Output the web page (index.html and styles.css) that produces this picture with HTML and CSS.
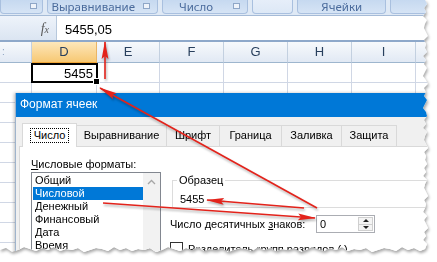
FILE: index.html
```html
<!DOCTYPE html>
<html lang="ru">

<head>
    <meta charset="UTF-8">
    <meta name="viewport" content="width=device-width, initial-scale=1.0">
    <title>Формат ячеек</title>
    <link rel="stylesheet" href="styles.css">
</head>

<body>
    <div class="shot">
        <div class="paper">
            <div class="ribbon">
                <div class="grp w1"><span class="launch"></span></div>
                <div class="grp w2 has-l">Выравнивание<span class="launch"></span></div>
                <div class="grp w3 has-l">Число<span class="launch"></span></div>
                <div class="grp w4 blank"></div>
                <div class="grp w5">Ячейки</div>
                <div class="grp w6"></div>
            </div>

            <div class="fbar">
                <div class="fx"><i>f<small>x</small></i></div>
                <div class="finput">5455,05</div>
            </div>

            <div class="grid">
                <div class="hd"><span class="dots">:</span></div>
                <div class="hd on">D</div>
                <div class="hd">E</div>
                <div class="hd">F</div>
                <div class="hd">G</div>
                <div class="hd">H</div>
                <div class="hd">I</div>
                <div class="hd"></div>

                <div class="cell"></div>
                <div class="cell active">5455</div>
                <div class="cell"></div>
                <div class="cell"></div>
                <div class="cell"></div>
                <div class="cell"></div>
                <div class="cell"></div>
                <div class="cell"></div>

                <div class="rest"></div>
            </div>

            <!-- dialog window over the sheet -->
            <div class="dialog">
                <div class="dtitle">Формат ячеек</div>
                <div class="dbody">
                    <div class="tabs">
                        <div class="tab on t1"><span class="focus">Число</span></div>
                        <div class="tab t2">Выравнивание</div>
                        <div class="tab t3">Шрифт</div>
                        <div class="tab t4">Граница</div>
                        <div class="tab t5">Заливка</div>
                        <div class="tab t6">Защита</div>
                    </div>
                    <div class="panel">
                        <div class="leftcol">
                            <div class="lbl"><u>Ч</u>исловые форматы:</div>
                            <div class="list">
                                <ul class="items">
                                    <li>Общий</li>
                                    <li class="sel">Числовой</li>
                                    <li>Денежный</li>
                                    <li>Финансовый</li>
                                    <li>Дата</li>
                                    <li>Время</li>
                                </ul>
                                <div class="vscroll">
                                    <svg width="9" height="6" viewBox="0 0 9 6"><path d="M1 5 L4.5 1.5 L8 5" fill="none" stroke="#a6a6a6" stroke-width="1.3"/></svg>
                                </div>
                            </div>
                        </div>
                        <div class="rightcol">
                            <fieldset class="sample">
                                <legend>Образец</legend>
                                <div class="sval">5455</div>
                            </fieldset>
                            <div class="decrow">
                                <span class="declbl">Число десятичных <u>з</u>наков:</span>
                                <div class="spin">
                                    <span class="spinval">0</span>
                                    <div class="spinbtns">
                                        <span class="up"></span>
                                        <span class="down"></span>
                                    </div>
                                </div>
                            </div>
                            <div class="chkrow"><span class="chk"></span>Разделитель групп разрядов ( )</div>
                        </div>
                    </div>
                </div>
            </div>

            <!-- red pointer arrows drawn on top -->
            <svg class="arrows" width="430" height="254" viewBox="0 0 430 254">
                <defs>
                    <marker id="head" markerWidth="18" markerHeight="8" refX="17" refY="4" orient="auto" markerUnits="userSpaceOnUse">
                        <path d="M0 0.6 L18 4 L0 7.4 L3 4 Z" fill="#e3231b"/>
                    </marker>
                </defs>
                <g stroke="#e3231b" stroke-width="1.6" fill="none" marker-end="url(#head)">
                    <line x1="105" y1="79" x2="105" y2="42"/>
                    <line x1="317" y1="208" x2="100" y2="88"/>
                    <line x1="304" y1="208" x2="207" y2="200"/>
                    <line x1="103" y1="203" x2="315" y2="218"/>
                </g>
            </svg>
        </div>
    </div>
</body>

</html>
```

FILE: styles.css
```css
* {
    box-sizing: border-box;
}

body {
    margin: 0;
    background: #fff;
    font-family: "Liberation Sans", Arial, sans-serif;
    color: #000;
}

.shot {
    width: 437px;
    height: 262px;
    filter: drop-shadow(1px 2px 1.5px rgba(0, 0, 0, 0.35));
}

.paper {
    position: relative;
    width: 430px;
    height: 254px;
    overflow: hidden;
    background: #fff;
    clip-path: polygon(0 0, 425px 0, 427px 4px, 424px 8px, 426px 12px, 423px 16px, 427px 20px, 425px 24px, 424px 28px, 426px 32px, 428px 36px, 424px 40px, 426px 44px, 425px 48px, 427px 52px, 423px 56px, 426px 60px, 424px 64px, 427px 68px, 425px 72px, 423px 76px, 426px 80px, 428px 84px, 424px 88px, 426px 92px, 424px 96px, 427px 100px, 425px 104px, 423px 108px, 426px 112px, 427px 116px, 424px 120px, 426px 124px, 423px 128px, 427px 132px, 425px 136px, 424px 140px, 426px 144px, 428px 148px, 424px 152px, 426px 156px, 425px 160px, 427px 164px, 424px 168px, 426px 172px, 423px 176px, 427px 180px, 425px 184px, 424px 188px, 426px 192px, 428px 196px, 424px 200px, 426px 204px, 425px 208px, 423px 212px, 427px 216px, 424px 220px, 426px 224px, 428px 228px, 424px 232px, 426px 236px, 423px 240px, 427px 244px, 425px 249px, 420px 251px, 414px 248px, 408px 250px, 402px 247px, 396px 251px, 390px 249px, 384px 248px, 378px 250px, 372px 252px, 366px 248px, 360px 250px, 354px 249px, 348px 251px, 342px 247px, 336px 250px, 330px 248px, 324px 251px, 318px 249px, 312px 247px, 306px 250px, 300px 252px, 294px 248px, 288px 250px, 282px 249px, 276px 251px, 270px 248px, 264px 250px, 258px 247px, 252px 251px, 246px 249px, 240px 248px, 234px 250px, 228px 252px, 222px 248px, 216px 250px, 210px 249px, 204px 251px, 198px 247px, 192px 250px, 186px 248px, 180px 251px, 174px 249px, 168px 247px, 162px 250px, 156px 252px, 150px 248px, 144px 250px, 138px 249px, 132px 251px, 126px 248px, 120px 250px, 114px 247px, 108px 251px, 102px 249px, 96px 248px, 90px 250px, 84px 252px, 78px 248px, 72px 250px, 66px 249px, 60px 251px, 54px 247px, 48px 250px, 42px 248px, 36px 251px, 30px 249px, 24px 247px, 18px 250px, 12px 252px, 6px 248px, 0 250px);
}

/* ribbon group captions */
.ribbon {
    display: flex;
    gap: 4px;
    height: 16px;
    background: #dfe9f5;
    border-bottom: 1px solid #a5bbd7;
}

.grp {
    position: relative;
    height: 14px;
    border: 1px solid #a9c0df;
    border-top: 0;
    border-radius: 0 0 4px 4px;
    background: linear-gradient(#c6d9f0, #d6e4f5);
    color: #4a6b9c;
    font-family: "Noto Sans", sans-serif;
    font-size: 11.5px;
    line-height: 13px;
    text-align: center;
    white-space: nowrap;
}

.has-l {
    padding-right: 18px;
}

.w1 { width: 43px; }
.w2 { width: 111px; }
.w3 { width: 87px; }
.w4 { width: 41px; background: linear-gradient(#e6eef9, #dde8f6); }
.w5 { width: 89px; }
.w6 { width: 40px; }

.launch {
    position: absolute;
    right: 7px;
    top: 3px;
    width: 7px;
    height: 6px;
    border: 1px solid #8ea6c7;
    background: #eef3fa;
}

.w1 .launch {
    right: 5px;
}

/* formula bar */
.fbar {
    display: flex;
    height: 26px;
    border-bottom: 2px solid #8ea8ca;
}

.fx {
    width: 57px;
    background: linear-gradient(#eef3fa, #dbe5f2);
    border-right: 1px solid #b7c8dc;
    padding: 3px 7px 0 0;
    text-align: right;
    font-family: "Liberation Serif", serif;
    font-size: 14px;
    line-height: 20px;
    color: #5b5b5b;
}

.fx small {
    font-size: 10px;
}

.finput {
    flex: 1;
    padding: 3px 0 0 8px;
    font-size: 13px;
    line-height: 21px;
}

/* sheet */
.grid {
    display: grid;
    grid-template-columns: 32px 65px 63px 64px 64px 64px 64px 1fr;
    grid-template-rows: 21px 20px 200px;
}

.hd {
    background: linear-gradient(#f7f9fc, #e1e9f4);
    border-right: 1px solid #c3d0e0;
    border-bottom: 1px solid #9eb6ce;
    text-align: center;
    font-size: 13px;
    line-height: 20px;
    color: #283f5d;
}

.hd.on {
    background: linear-gradient(#fde7bb, #f7c873);
    border-right-color: #eab565;
    border-bottom-color: #f0a536;
}

.dots {
    display: block;
    text-align: left;
    padding-left: 2px;
    color: #8aa2c0;
    font-size: 10px;
}

.cell {
    border-right: 1px solid #d0d7e5;
    border-bottom: 1px solid #d0d7e5;
}

.cell.active {
    position: relative;
    border: 2px solid #000;
    margin: 0 -1px 0 -1px;
    padding-right: 3px;
    text-align: right;
    font-size: 13px;
    line-height: 17px;
}

.cell.active::after {
    content: "";
    position: absolute;
    right: -4px;
    bottom: -4px;
    width: 5px;
    height: 5px;
    background: #000;
    border: 1px solid #fff;
}

.rest {
    grid-column: 1 / -1;
    background:
        linear-gradient(#d0d7e5, #d0d7e5) 31px 0 / 1px 100% no-repeat,
        linear-gradient(#d0d7e5, #d0d7e5) 96px 0 / 1px 100% no-repeat,
        linear-gradient(#d0d7e5, #d0d7e5) 159px 0 / 1px 100% no-repeat,
        linear-gradient(#d0d7e5, #d0d7e5) 223px 0 / 1px 100% no-repeat,
        linear-gradient(#d0d7e5, #d0d7e5) 287px 0 / 1px 100% no-repeat,
        linear-gradient(#d0d7e5, #d0d7e5) 351px 0 / 1px 100% no-repeat,
        linear-gradient(#d0d7e5, #d0d7e5) 415px 0 / 1px 100% no-repeat,
        repeating-linear-gradient(transparent 0 19px, #d0d7e5 19px 20px);
}

/* dialog */
.dialog {
    position: absolute;
    left: 15px;
    top: 93px;
    width: 420px;
    height: 170px;
    background: #f0f0f0;
    border-left: 1px solid #9fb4cc;
    box-shadow: -1px 0 3px rgba(0, 0, 0, 0.25);
    font-size: 11px;
}

.dtitle {
    height: 24px;
    padding-left: 4px;
    background: #0078d7;
    color: #fff;
    font-size: 12px;
    line-height: 23px;
}

.dbody {
    padding: 6px 0 0 3px;
}

.tabs {
    display: flex;
    align-items: flex-end;
    height: 23px;
    margin-left: 3px;
}

.tab {
    height: 21px;
    margin-left: -1px;
    border: 1px solid #d9d9d9;
    border-bottom: 0;
    background: #f0f0f0;
    text-align: center;
    line-height: 19px;
    white-space: nowrap;
}

.tab.on {
    position: relative;
    z-index: 1;
    height: 24px;
    margin: 0 0 -1px 0;
    background: #fff;
    line-height: 22px;
}

.focus {
    padding: 0 3px 1px;
    outline: 1px dotted #000;
}

.t1 { width: 55px; }
.t2 { width: 91px; }
.t3 { width: 54px; }
.t4 { width: 63px; }
.t5 { width: 61px; }
.t6 { width: 56px; }

.panel {
    display: flex;
    height: 120px;
    padding: 10px 0 0 11px;
    background: #fff;
    border: 1px solid #d9d9d9;
}

.leftcol {
    width: 130px;
    flex: none;
}

.lbl {
    line-height: 15px;
    white-space: nowrap;
}

.list {
    display: flex;
    height: 100px;
    border: 1px solid #828790;
}

.items {
    flex: 1;
    margin: 0;
    padding: 1px 0 0 1px;
    list-style: none;
}

.items li {
    padding-left: 2px;
    line-height: 13px;
    white-space: nowrap;
}

.items li.sel {
    background: #0078d7;
    color: #fff;
}

.vscroll {
    width: 17px;
    background: #f2f2f2;
    padding: 6px 0 0 4px;
}

.vscroll svg {
    display: block;
}

.rightcol {
    flex: 1;
    margin-left: 9px;
}

.sample {
    width: 280px;
    margin: 16px 0 0 2px;
    padding: 5px 8px 1px 7px;
    border: 1px solid #dcdcdc;
}

.sample legend {
    margin-left: -3px;
    padding: 0 2px;
    line-height: 14px;
}

.sval {
    line-height: 14px;
}

.decrow {
    display: flex;
    align-items: center;
    margin-top: 7px;
    white-space: nowrap;
}

.declbl {
    width: 146px;
}

.spin {
    display: flex;
    width: 59px;
    height: 18px;
    border: 1px solid #abadb3;
}

.spinval {
    flex: 1;
    padding-left: 3px;
    line-height: 16px;
}

.spinbtns {
    display: flex;
    flex-direction: column;
    width: 15px;
    margin: 1px;
    border: 1px solid #cfcfcf;
    background: #f4f4f4;
}

.spinbtns span {
    flex: 1;
    display: flex;
    justify-content: center;
    align-items: center;
}

.up::before,
.down::before {
    content: "";
    border-left: 3px solid transparent;
    border-right: 3px solid transparent;
}

.up::before {
    border-bottom: 3px solid #222;
}

.down::before {
    border-top: 3px solid #222;
}

.down {
    border-top: 1px solid #cfcfcf;
}

.chkrow {
    display: flex;
    align-items: center;
    gap: 5px;
    margin-top: 9px;
    white-space: nowrap;
}

.chk {
    width: 13px;
    height: 13px;
    border: 1px solid #333;
    background: #fff;
}

/* arrows */
.arrows {
    position: absolute;
    left: 0;
    top: 0;
    pointer-events: none;
    filter: drop-shadow(1px 2px 1px rgba(0, 0, 0, 0.3));
}
```
